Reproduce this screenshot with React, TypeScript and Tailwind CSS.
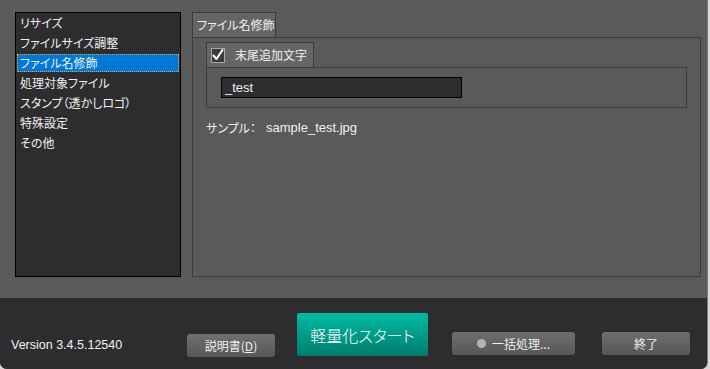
const items = ['リサイズ', 'ファイルサイズ調整', 'ファイル名修飾', '処理対象ファイル', 'スタンプ（透かしロゴ）', '特殊設定', 'その他'];

const jp = { fontFamily: '"Noto Sans CJK JP", "Noto Sans", sans-serif', fontFeatureSettings: '"palt"' };
const latin = { fontFamily: '"Liberation Sans", "Noto Sans CJK JP", sans-serif' };

export default function App() {
  const selected = 2;

  return (
    <div className="w-[710px] h-[369px] bg-[#d8d8d8] text-[#f0f0f0] text-[12px] whitespace-nowrap" style={jp}>
      <div className="w-[708px] h-[369px] flex flex-col bg-[#5a5a5a] rounded-b-[7px] overflow-hidden border-r border-[#7a7a7a]">
        {/* top area */}
        <div className="h-[298px] flex pt-[12px] pl-[15px] gap-[11px]">
          <div className="w-[166px] h-[265px] bg-[#2d2d2f] border border-black flex flex-col">
            {items.map((it, i) => (
              <div
                key={it}
                className={`h-[18px] my-[1px] mx-[1px] flex items-center pl-[2px] leading-none ${
                  i === selected ? 'bg-[#0078d7] border border-dotted border-[#f0a030]' : 'border border-transparent'
                }`}
              >
                {it}
              </div>
            ))}
          </div>

          <div className="flex flex-col w-[509px]">
            <div className="w-[84px] h-[25px] bg-[#646464] border border-b-0 border-[#3c3c3c] flex items-center pl-[4px]">
              ファイル名修飾
            </div>
            <div className="h-[240px] border border-[#3c3c3c] pl-[13px] pt-[4px] pr-[13px] flex flex-col">
              <div className="w-[108px] h-[25px] bg-[#666666] border border-b-0 border-[#3c3c3c] flex items-center pl-[4px] gap-[10px]">
                <div className="w-[14px] h-[15px] bg-[#3a3a3a] border border-[#a8a8a8] flex items-center justify-center">
                  <svg width="12" height="12" viewBox="0 0 12 12">
                    <path d="M1.5 6.5 L4.5 10 L10.5 1" fill="none" stroke="#ffffff" strokeWidth="2" strokeLinecap="round" strokeLinejoin="round" />
                  </svg>
                </div>
                <span>末尾追加文字</span>
              </div>
              <div className="w-[481px] h-[41px] border border-[#3c3c3c] pl-[14px] pt-[9px]">
                <div className="w-[241px] h-[21px] bg-[#2d2d2f] border border-black flex items-center pl-[3px] text-[13px]" style={latin}>
                  _test
                </div>
              </div>
              <div className="flex items-center mt-[12px] h-[16px]">
                <span className="w-[60px] shrink-0">サンプル：</span>
                <span className="text-[13px]" style={latin}>sample_test.jpg</span>
              </div>
            </div>
          </div>
        </div>

        {/* bottom bar */}
        <div className="flex-1 bg-[#2d2d2f] flex items-end pl-[11px] pb-[12px]">
          <span className="w-[176px] shrink-0 text-[12.5px] mb-[2px]" style={latin}>
            Version 3.4.5.12540
          </span>
          <button className="w-[88px] h-[23px] rounded-[3px] bg-gradient-to-b from-[#707070] to-[#575757] flex items-center justify-center text-[12px]">
            説明書(<span className="underline">D</span>)
          </button>
          <button className="ml-[22px] mb-[1px] w-[131px] h-[43px] rounded-[2px] bg-gradient-to-b from-[#00bca4] to-[#007d6e] flex items-center justify-center text-[16px] font-light text-white">
            軽量化スタート
          </button>
          <button className="ml-[24px] mb-[2px] w-[123px] h-[23px] rounded-[3px] bg-gradient-to-b from-[#6e6e6e] to-[#575757] flex items-center justify-center gap-[6px] text-[12px]">
            <span className="w-[9px] h-[9px] rounded-full bg-[#b4b4b4]" />
            一括処理...
          </button>
          <button className="ml-[27px] mb-[2px] w-[88px] h-[23px] rounded-[3px] bg-gradient-to-b from-[#6e6e6e] to-[#575757] flex items-center justify-center text-[12px]">
            終了
          </button>
        </div>
      </div>
    </div>
  );
}
